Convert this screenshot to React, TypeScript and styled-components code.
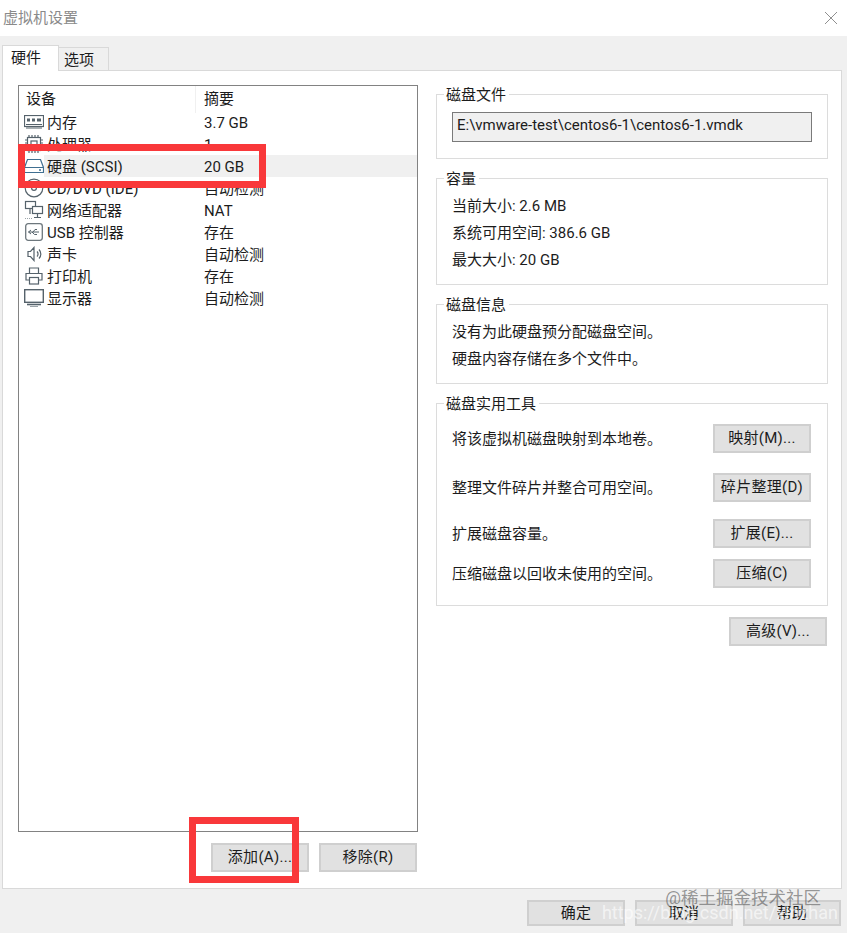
import React, { ReactNode } from 'react'
import styled, { createGlobalStyle } from 'styled-components'

const GlobalStyle = createGlobalStyle`
  html, body {
    margin: 0;
    padding: 0;
    background: #f0f0f0;
  }
  * {
    box-sizing: border-box;
  }
`

const FONT = `Roboto, "Noto Sans CJK SC", sans-serif`

const Dialog = styled.div`
  position: relative;
  width: 847px;
  height: 933px;
  overflow: hidden;
  display: flex;
  flex-direction: column;
  background: #f0f0f0;
  color: #1c1c1c;
  font-family: ${FONT};
  font-size: 15px;
  line-height: 22px;
`

const TitleBar = styled.div`
  height: 36px;
  flex: none;
  display: flex;
  align-items: center;
  justify-content: space-between;
  padding: 0 9px 0 3px;
  background: #fff;
  color: #8a8a8a;
`

const TabStrip = styled.div`
  height: 35px;
  flex: none;
  display: flex;
  align-items: flex-end;
  padding: 0 0 0 2px;
  position: relative;
  z-index: 1;
`

const Tab = styled.div<{ $active?: boolean }>`
  height: ${p => (p.$active ? 26 : 24)}px;
  width: ${p => (p.$active ? 57 : 50)}px;
  padding-left: ${p => (p.$active ? 8 : 5)}px;
  line-height: ${p => (p.$active ? 24 : 25)}px;
  background: ${p => (p.$active ? '#fff' : '#f0f0f0')};
  border: 1px solid #d9d9d9;
  border-bottom: ${p => (p.$active ? 'none' : '1px solid #d9d9d9')};
  border-left: ${p => (p.$active ? '1px solid #d9d9d9' : 'none')};
`

const Panel = styled.div`
  height: 819px;
  flex: none;
  margin: -1px 5px 0 2px;
  background: #fff;
  border: 1px solid #d9d9d9;
  display: grid;
  grid-template-columns: 400px 392px;
  column-gap: 18px;
  padding: 14px 0 0 15px;
`

const LeftColumn = styled.div`
  display: flex;
  flex-direction: column;
`

const DeviceList = styled.div`
  height: 747px;
  border: 1px solid #828282;
  display: flex;
  flex-direction: column;
`

const HeaderRow = styled.div`
  height: 25px;
  flex: none;
  display: grid;
  grid-template-columns: 176px 1fr;
  line-height: 27px;
`

const HeaderCell = styled.div<{ $first?: boolean }>`
  padding-left: ${p => (p.$first ? 7 : 8)}px;
  border-left: ${p => (p.$first ? 'none' : '1px solid #f0f0f0')};
`

const DeviceRow = styled.div`
  height: 22px;
  flex: none;
  display: flex;
`

const IconCell = styled.div`
  width: 25px;
  flex: none;
  padding-left: 5px;
  display: flex;
  align-items: center;
  justify-content: center;
`

const RowBody = styled.div<{ $selected?: boolean }>`
  flex: 1;
  display: flex;
  line-height: 24px;
  background: ${p => (p.$selected ? '#f0f0f0' : 'transparent')};
`

const DeviceName = styled.div`
  width: 160px;
  padding-left: 3px;
  white-space: nowrap;
`

const ListActions = styled.div`
  margin-top: 11px;
  padding-right: 1px;
  display: flex;
  justify-content: flex-end;
  gap: 10px;
`

const Button = styled.div`
  width: 98px;
  height: 29px;
  flex: none;
  background: #e1e1e1;
  border: 2px solid #cfcfcf;
  text-align: center;
  line-height: 25px;
  letter-spacing: 0.3px;
  white-space: nowrap;
`

const RightColumn = styled.div`
  display: flex;
  flex-direction: column;
  padding-top: 9px;
`

const Group = styled.div<{ $height: number }>`
  height: ${p => p.$height}px;
  flex: none;
  margin-bottom: 19px;
  border: 1px solid #dcdcdc;
  padding: 0 15px;
`

const Legend = styled.div`
  width: fit-content;
  height: 22px;
  margin: -11px 0 0 -8px;
  padding: 0 3px 0 2px;
  background: #fff;
`

const PathField = styled.div`
  height: 30px;
  width: 360px;
  margin-top: 6px;
  padding-left: 4px;
  background: #f0f0f0;
  border: 1px solid #7a7a7a;
  line-height: 25px;
  white-space: nowrap;
`

const InfoLines = styled.div`
  display: flex;
  flex-direction: column;
  gap: 5px;
  margin-top: 5px;
`

const ToolRow = styled.div<{ $top: number }>`
  display: flex;
  align-items: center;
  justify-content: space-between;
  margin-top: ${p => p.$top}px;
  padding-right: 1px;
`

const AdvancedRow = styled.div`
  display: flex;
  justify-content: flex-end;
  margin-top: -8px;
  padding-right: 1px;
`

const Footer = styled.div`
  flex: 1;
  display: flex;
  justify-content: flex-end;
  gap: 10px;
  padding: 11px 6px 0 0;
`

const FooterButton = styled(Button)`
  height: 26px;
  line-height: 23px;
`

const Annotation = styled.div<{ $x: number; $y: number; $w: number; $h: number }>`
  position: absolute;
  left: ${p => p.$x}px;
  top: ${p => p.$y}px;
  width: ${p => p.$w}px;
  height: ${p => p.$h}px;
  border: 7px solid #f9383a;
  z-index: 3;
`

const BrandMark = styled.div`
  position: absolute;
  right: 26px;
  top: 887px;
  color: rgba(90, 90, 90, 0.62);
  font-size: 17.5px;
  z-index: 4;
  white-space: nowrap;
`

const UrlMark = styled.div`
  position: absolute;
  right: 9px;
  top: 902px;
  color: rgba(255, 255, 255, 0.62);
  font-size: 18px;
  z-index: 4;
  white-space: nowrap;
`

const s = { fill: 'none', stroke: '#55626b', strokeWidth: 1.2 }

const icons: Record<string, ReactNode> = {
  memory: (
    <svg width="20" height="14" viewBox="0 0 20 14">
      <rect x="0.5" y="0.5" width="19" height="11" {...s} />
      <path d="M3 3.5h3v3H3zM8 3.5h3v3H8zM13 3.5h4v3h-4z" fill="#55626b" />
      <path d="M2 9.5h16M2 13h16" {...s} />
    </svg>
  ),
  cpu: (
    <svg width="20" height="20" viewBox="0 0 20 20">
      <rect x="3.5" y="3.5" width="13" height="13" {...s} />
      <rect x="7" y="7" width="6" height="6" {...s} />
      <path d="M5 1v2M8 1v2M11 1v2M14 1v2M5 17v2M8 17v2M11 17v2M14 17v2M1 6h2M1 9h2M1 12h2M17 6h2M17 9h2M17 12h2" {...s} />
    </svg>
  ),
  disk: (
    <svg width="20" height="16" viewBox="0 0 20 16">
      <path d="M3.5 1.5h13l3 8v5h-19v-5zM.5 9.5h19" fill="none" stroke="#3f6f91" strokeWidth="1.2" />
      <path d="M15 12h2" stroke="#3f6f91" strokeWidth="1.4" />
    </svg>
  ),
  cd: (
    <svg width="20" height="20" viewBox="0 0 20 20">
      <circle cx="10" cy="10" r="8.8" {...s} />
      <circle cx="10" cy="10" r="2.4" {...s} />
    </svg>
  ),
  network: (
    <svg width="20" height="20" viewBox="0 0 20 20">
      <rect x="1.5" y="1.5" width="10" height="7" {...s} />
      <rect x="8.5" y="6.5" width="10" height="7" fill="#fff" stroke="#55626b" strokeWidth="1.2" />
      <path d="M13.5 14v3M10 17.5h7M6 9v5" {...s} />
      <path d="M1 18.5h7" stroke="#9aa3a8" strokeDasharray="1 1" />
    </svg>
  ),
  usb: (
    <svg width="18" height="18" viewBox="0 0 18 18">
      <rect x="0.7" y="0.7" width="16.6" height="16.6" rx="2.5" fill="none" stroke="#6d777d" strokeWidth="1.3" />
      <path d="M3.5 9H14M3.5 9l2.5-2M3.5 9L6 11M7 9l2.5 2.5H12M8 9l2-2.5h2" fill="none" stroke="#55626b" strokeWidth="1" />
    </svg>
  ),
  sound: (
    <svg width="15" height="16" viewBox="0 0 15 16">
      <path d="M1 5.5h2.500l3.500-4v13l-3.500-4H1z" {...s} />
      <path d="M10 5.500a3.500 3.500 0 0 1 0 5M12 3.500a6.500 6.500 0 0 1 0 9" {...s} />
    </svg>
  ),
  printer: (
    <svg width="18" height="18" viewBox="0 0 18 18">
      <path d="M4.5 6V1h9v5M4.500 13H1V6.500h16V13h-3.500" {...s} />
      <rect x="4.5" y="10.5" width="9" height="6.5" {...s} />
    </svg>
  ),
  monitor: (
    <svg width="20" height="18" viewBox="0 0 20 18">
      <rect x="0.7" y="0.7" width="18.6" height="12.6" fill="none" stroke="#55626b" strokeWidth="1.4" />
      <path d="M3 15.5h14" stroke="#55626b" strokeWidth="1.6" />
      <path d="M6 17.5h8" stroke="#9aa3a8" />
    </svg>
  ),
}

const devices = [
  { icon: 'memory', name: '内存', summary: '3.7 GB' },
  { icon: 'cpu', name: '处理器', summary: '1' },
  { icon: 'disk', name: '硬盘 (SCSI)', summary: '20 GB', selected: true },
  { icon: 'cd', name: 'CD/DVD (IDE)', summary: '自动检测' },
  { icon: 'network', name: '网络适配器', summary: 'NAT' },
  { icon: 'usb', name: 'USB 控制器', summary: '存在' },
  { icon: 'sound', name: '声卡', summary: '自动检测' },
  { icon: 'printer', name: '打印机', summary: '存在' },
  { icon: 'monitor', name: '显示器', summary: '自动检测' },
]

const tools = [
  { text: '将该虚拟机磁盘映射到本地卷。', button: '映射(M)...', top: 9 },
  { text: '整理文件碎片并整合可用空间。', button: '碎片整理(D)', top: 20 },
  { text: '扩展磁盘容量。', button: '扩展(E)...', top: 17 },
  { text: '压缩磁盘以回收未使用的空间。', button: '压缩(C)', top: 11 },
]

export default function App() {
  return (
    <Dialog>
      <GlobalStyle />
      <TitleBar>
        虚拟机设置
        <svg width="14" height="14" viewBox="0 0 14 14">
          <path d="M1 1l12 12M13 1L1 13" stroke="#8f8f8f" strokeWidth="1" fill="none" />
        </svg>
      </TitleBar>
      <TabStrip>
        <Tab $active>硬件</Tab>
        <Tab>选项</Tab>
      </TabStrip>
      <Panel>
        <LeftColumn>
          <DeviceList>
            <HeaderRow>
              <HeaderCell $first>设备</HeaderCell>
              <HeaderCell>摘要</HeaderCell>
            </HeaderRow>
            {devices.map(d => (
              <DeviceRow key={d.icon}>
                <IconCell>{icons[d.icon]}</IconCell>
                <RowBody $selected={d.selected}>
                  <DeviceName>{d.name}</DeviceName>
                  <div>{d.summary}</div>
                </RowBody>
              </DeviceRow>
            ))}
          </DeviceList>
          <ListActions>
            <Button>添加(A)...</Button>
            <Button>移除(R)</Button>
          </ListActions>
        </LeftColumn>
        <RightColumn>
          <Group $height={65}>
            <Legend>磁盘文件</Legend>
            <PathField>E:\vmware-test\centos6-1\centos6-1.vmdk</PathField>
          </Group>
          <Group $height={107}>
            <Legend>容量</Legend>
            <InfoLines>
              <div>当前大小: 2.6 MB</div>
              <div>系统可用空间: 386.6 GB</div>
              <div>最大大小: 20 GB</div>
            </InfoLines>
          </Group>
          <Group $height={80}>
            <Legend>磁盘信息</Legend>
            <InfoLines>
              <div>没有为此硬盘预分配磁盘空间。</div>
              <div>硬盘内容存储在多个文件中。</div>
            </InfoLines>
          </Group>
          <Group $height={203}>
            <Legend>磁盘实用工具</Legend>
            {tools.map(t => (
              <ToolRow key={t.button} $top={t.top}>
                <div>{t.text}</div>
                <Button>{t.button}</Button>
              </ToolRow>
            ))}
          </Group>
          <AdvancedRow>
            <Button>高级(V)...</Button>
          </AdvancedRow>
        </RightColumn>
      </Panel>
      <Footer>
        <FooterButton>确定</FooterButton>
        <FooterButton>取消</FooterButton>
        <FooterButton>帮助</FooterButton>
      </Footer>
      <Annotation $x={18} $y={144} $w={248} $h={44} />
      <Annotation $x={189} $y={817} $w={110} $h={66} />
      <BrandMark>@稀土掘金技术社区</BrandMark>
      <UrlMark>https://blog.csdn.net/xinzhan</UrlMark>
    </Dialog>
  )
}
